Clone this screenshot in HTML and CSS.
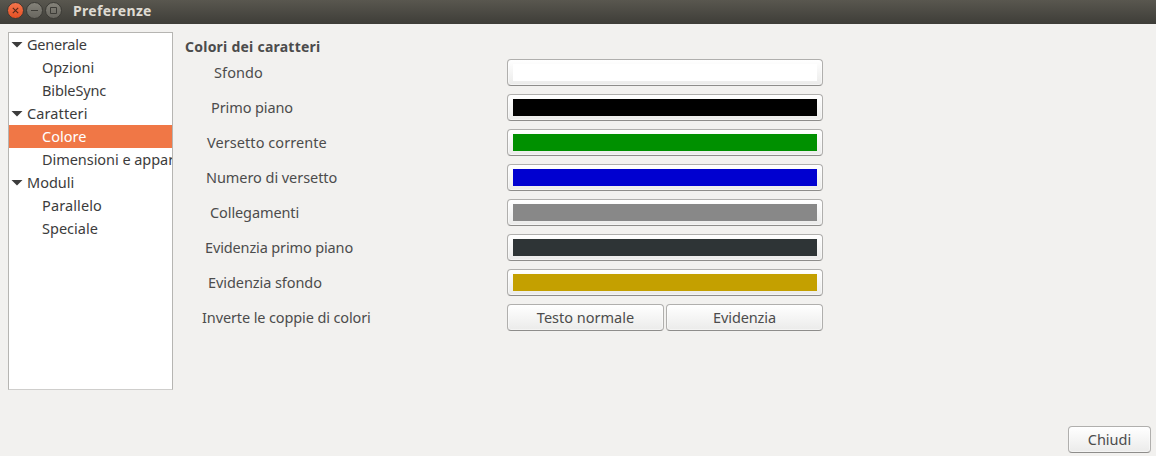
FILE: index.html
```html
<!DOCTYPE html>
<html lang="it">
<head>
<meta charset="utf-8">
<title>Preferenze</title>
<link rel="stylesheet" href="styles.css">
</head>
<body>
<header class="titlebar">
  <svg class="controls" width="58" height="24" viewBox="0 0 58 24">
    <defs>
      <linearGradient id="close" x1="0" y1="0" x2="0" y2="1"><stop offset="0" stop-color="#f4764e"/><stop offset="1" stop-color="#e64f22"/></linearGradient>
      <linearGradient id="other" x1="0" y1="0" x2="0" y2="1"><stop offset="0" stop-color="#85837a"/><stop offset="1" stop-color="#67655e"/></linearGradient>
    </defs>
    <g stroke="#3a3934" stroke-width="1">
      <circle cx="9.5" cy="10.5" r="8" fill="url(#close)"/>
      <circle cx="28.5" cy="10.5" r="8" fill="url(#other)"/>
      <circle cx="47.5" cy="10.5" r="8" fill="url(#other)"/>
    </g>
    <path d="M6.8 7.800l5.400 5.400M12.200 7.800l-5.400 5.400" stroke="#55291b" stroke-width="1.1"/>
    <path d="M25 10.500h7M44.500 7.500h6v6h-6z" fill="none" stroke="#3d3c37"/>
  </svg>
  <h1 class="title">Preferenze</h1>
</header>
<main class="content">
  <nav class="tree">
    <div class="node group"><i class="arrow"></i><span class="t-generale">Generale</span></div>
    <div class="node leaf"><span>Opzioni</span></div>
    <div class="node leaf"><span class="t-sync">BibleSync</span></div>
    <div class="node group"><i class="arrow"></i><span class="t-caratteri">Caratteri</span></div>
    <div class="node leaf selected"><span>Colore</span></div>
    <div class="node leaf"><span class="t-dimensioni">Dimensioni e appar</span></div>
    <div class="node group"><i class="arrow"></i><span>Moduli</span></div>
    <div class="node leaf"><span class="t-parallelo">Parallelo</span></div>
    <div class="node leaf"><span>Speciale</span></div>
  </nav>
  <section class="panel">
    <h2 class="heading">Colori dei caratteri</h2>
    <div class="rows">
      <div class="row"><label class="label l-sfondo">Sfondo</label><button class="button"><i class="swatch white"></i></button></div>
      <div class="row"><label class="label l-primo">Primo piano</label><button class="button"><i class="swatch black"></i></button></div>
      <div class="row"><label class="label l-versetto">Versetto corrente</label><button class="button"><i class="swatch green"></i></button></div>
      <div class="row"><label class="label l-numero">Numero di versetto</label><button class="button"><i class="swatch blue"></i></button></div>
      <div class="row"><label class="label l-collegamenti">Collegamenti</label><button class="button"><i class="swatch gray"></i></button></div>
      <div class="row"><label class="label l-evprimo">Evidenzia primo piano</label><button class="button"><i class="swatch slate"></i></button></div>
      <div class="row"><label class="label l-evsfondo">Evidenzia sfondo</label><button class="button"><i class="swatch gold"></i></button></div>
      <div class="row"><label class="label l-inverte">Inverte le coppie di colori</label><div class="pair"><button class="button">Testo normale</button><button class="button t-evidenzia">Evidenzia</button></div></div>
    </div>
  </section>
</main>
<footer class="footer"><button class="button close-button">Chiudi</button></footer>
</body>
</html>
```
FILE: styles.css
```css
* { box-sizing: border-box; }
body {
  margin: 0; width: 1156px; height: 456px; overflow: hidden;
  display: flex; flex-direction: column;
  background: #f2f1ef; color: #4c4c4c;
  font: 14.5px/23px "Noto Sans", "Open Sans", sans-serif;
}
.titlebar {
  height: 24px; flex: none; display: flex; padding-left: 6px;
  background: linear-gradient(#59574f, #3e3d38);
}
.controls { flex: none; }
.title { margin: 0 0 0 9px; font-size: 14px; line-height: 22px; font-weight: 700; color: #dfdbd2; white-space: nowrap; letter-spacing: .33px; }
.content { display: flex; flex: none; height: 366px; padding: 8px 0 0 8px; }
.tree {
  width: 165px; height: 358px; flex: none; overflow: hidden;
  background: #fff; border: 1px solid #b6b5b2; border-bottom-color: #cfcecc;
  color: #3c3c3c;
}
.node { height: 23px; display: flex; align-items: center; white-space: nowrap; }
.group { padding-left: 2px; gap: 4px; }
.leaf { padding-left: 33px; }
.selected { background: #f07746; color: #fff; }
.arrow { width: 12px; height: 6px; background: #3c3c3c; clip-path: polygon(0 0, 100% 0, 50% 100%); }
.panel { width: 650px; padding-left: 12px; }
.heading { margin: 3px 0 1px; height: 23px; font-size: 14px; line-height: 23px; font-weight: 700; white-space: nowrap; letter-spacing: .24px; }
.rows { display: grid; gap: 8px; }
.row { height: 27px; display: grid; grid-template-columns: 322px 316px; align-items: center; }
.label { white-space: nowrap; line-height: 27px; }
.button {
  display: flex; align-items: center; justify-content: center;
  width: 100%; height: 27px; padding: 4px 5px; margin: 0;
  border: 1px solid #b0afad; border-bottom-color: #8e8d8b; border-radius: 4px;
  background: linear-gradient(#fff, #ebebea);
  box-shadow: inset 0 0 0 1px rgba(255,255,255,.45);
  color: #4c4c4c; font: inherit; line-height: 17px; white-space: nowrap;
}
.pair { display: grid; grid-template-columns: 157px 157px; gap: 2px; }
.swatch { width: 304px; height: 17px; flex: none; }
.white { background: #fff; }
.black { background: #000; }
.green { background: #009000; }
.blue { background: #0000d0; }
.gray { background: #888; }
.slate { background: #2e3436; }
.gold { background: #c4a000; }
.l-sfondo { padding-left: 29px; letter-spacing: .1px; }
.l-primo { padding-left: 26px; letter-spacing: -.1px; }
.l-versetto { padding-left: 22px; letter-spacing: .07px; }
.l-numero { padding-left: 21px; letter-spacing: -.06px; }
.l-collegamenti { padding-left: 25px; letter-spacing: -.1px; }
.l-evprimo { padding-left: 20px; letter-spacing: -.14px; }
.l-evsfondo { padding-left: 23px; letter-spacing: -.07px; }
.l-inverte { padding-left: 17px; letter-spacing: -.12px; }
.t-generale { letter-spacing: -.24px; }
.t-sync { letter-spacing: -.12px; }
.t-caratteri { letter-spacing: .12px; }
.t-dimensioni { letter-spacing: -.05px; }
.t-parallelo { letter-spacing: .12px; }
.t-evidenzia { letter-spacing: -.12px; }
.footer { display: flex; justify-content: flex-end; padding: 36px 5px 0 0; }
.close-button { width: 83px; }
```
